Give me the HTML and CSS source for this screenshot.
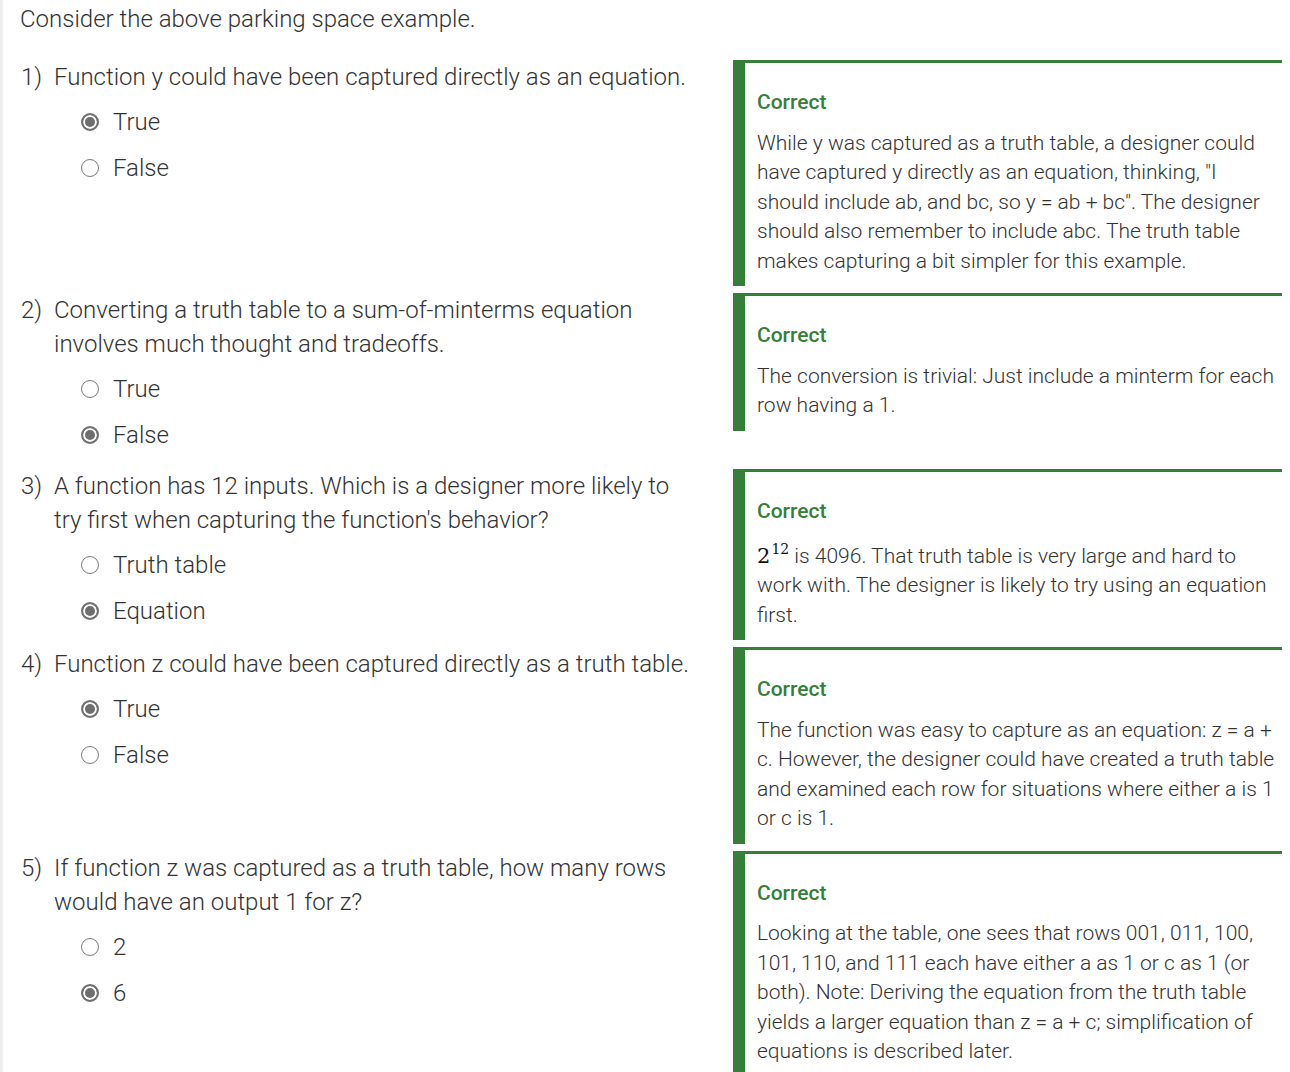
FILE: index.html
```html
<!DOCTYPE html>
<html>
<head>
<meta charset="utf-8">
<link rel="stylesheet" href="styles.css">
</head>
<body>
<div class="page">
  <p class="intro">Consider the above parking space example.</p>

  <div class="row">
    <div class="question">
      <span class="num">1)</span>
      <div class="qbody">
        <div class="qtext">Function y could have been captured directly as an equation.</div>
        <div class="options">
          <div class="opt"><span class="radio checked"></span>True</div>
          <div class="opt"><span class="radio"></span>False</div>
        </div>
      </div>
    </div>
    <div class="feedback">
      <div class="fb-title">Correct</div>
      <p class="fb-text">While y was captured as a truth table, a designer could have captured y directly as an equation, thinking, "I should include ab, and bc, so y = ab + bc". The designer should also remember to include abc. The truth table makes capturing a bit simpler for this example.</p>
    </div>
  </div>

  <div class="row">
    <div class="question">
      <span class="num">2)</span>
      <div class="qbody">
        <div class="qtext">Converting a truth table to a sum-of-minterms equation involves much thought and tradeoffs.</div>
        <div class="options">
          <div class="opt"><span class="radio"></span>True</div>
          <div class="opt"><span class="radio checked"></span>False</div>
        </div>
      </div>
    </div>
    <div class="feedback">
      <div class="fb-title">Correct</div>
      <p class="fb-text">The conversion is trivial: Just include a minterm for each row having a 1.</p>
    </div>
  </div>

  <div class="row">
    <div class="question">
      <span class="num">3)</span>
      <div class="qbody">
        <div class="qtext">A function has 12 inputs. Which is a designer more likely to try first when capturing the function's behavior?</div>
        <div class="options">
          <div class="opt"><span class="radio"></span>Truth table</div>
          <div class="opt"><span class="radio checked"></span>Equation</div>
        </div>
      </div>
    </div>
    <div class="feedback">
      <div class="fb-title">Correct</div>
      <p class="fb-text fb-math"><span class="math">2<sup>12</sup></span> is 4096. That truth table is very large and hard to work with. The designer is likely to try using an equation first.</p>
    </div>
  </div>

  <div class="row">
    <div class="question">
      <span class="num">4)</span>
      <div class="qbody">
        <div class="qtext">Function z could have been captured directly as a truth table.</div>
        <div class="options">
          <div class="opt"><span class="radio checked"></span>True</div>
          <div class="opt"><span class="radio"></span>False</div>
        </div>
      </div>
    </div>
    <div class="feedback">
      <div class="fb-title">Correct</div>
      <p class="fb-text">The function was easy to capture as an equation: z = a + c. However, the designer could have created a truth table and examined each row for situations where either a is 1 or c is 1.</p>
    </div>
  </div>

  <div class="row">
    <div class="question">
      <span class="num">5)</span>
      <div class="qbody">
        <div class="qtext">If function z was captured as a truth table, how many rows would have an output 1 for z?</div>
        <div class="options">
          <div class="opt"><span class="radio"></span>2</div>
          <div class="opt"><span class="radio checked"></span>6</div>
        </div>
      </div>
    </div>
    <div class="feedback">
      <div class="fb-title">Correct</div>
      <p class="fb-text">Looking at the table, one sees that rows 001, 011, 100, 101, 110, and 111 each have either a as 1 or c as 1 (or both). Note: Deriving the equation from the truth table yields a larger equation than z = a + c; simplification of equations is described later.</p>
    </div>
  </div>
</div>
</body>
</html>
```

FILE: styles.css
```css
html, body {
  margin: 0;
  padding: 0;
  background: #ffffff;
}

body {
  font-family: Roboto, "Liberation Sans", sans-serif;
  font-weight: 300;
  color: #333333;
}

.page {
  border-left: 3px solid #eeeeee;
  padding: 2px 8px 0 17px;
  min-height: 1072px;
  box-sizing: border-box;
}

.intro {
  margin: 0 0 24px 0;
  font-size: 24px;
  line-height: 34px;
}

.row {
  display: flex;
  align-items: flex-start;
  margin-bottom: 7px;
}

.question {
  flex: 0 0 678px;
  display: flex;
  font-size: 24px;
  line-height: 34px;
  padding-bottom: 10px;
}

.num {
  flex: 0 0 34px;
  padding-left: 1px;
  box-sizing: border-box;
}

.qbody {
  flex: 1;
}

.options {
  margin-left: 27px;
  padding-top: 11px;
  display: flex;
  flex-direction: column;
  gap: 12px;
}

.opt {
  display: flex;
  align-items: center;
  height: 34px;
}

.radio {
  width: 18px;
  height: 18px;
  box-sizing: border-box;
  border: 1.5px solid #7a7a7a;
  border-radius: 50%;
  margin-right: 14px;
  flex: 0 0 auto;
  background: #fff;
}

.radio.checked {
  border: 2px solid #707070;
  background: #6e6e6e;
  box-shadow: inset 0 0 0 2px #ffffff;
}

.feedback {
  margin-left: auto;
  width: 549px;
  box-sizing: border-box;
  border-top: 3px solid #367f39;
  border-left: 12px solid #367f39;
  padding: 25px 6px 10px 12px;
  font-size: 21px;
  line-height: 29.5px;
}

.fb-title {
  font-weight: 500;
  color: #367f39;
  font-size: 21px;
  line-height: 29.5px;
}

.fb-text {
  margin: 11px 0 0 0;
}

.fb-text.fb-math {
  margin-top: 15px;
}

.math {
  font-family: "DejaVu Serif", "Liberation Serif", serif;
  font-weight: 400;
  font-size: 21px;
  color: #111;
}

.math sup {
  font-size: 14px;
  line-height: 0;
  vertical-align: 9px;
  margin-left: 1px;
}
```
